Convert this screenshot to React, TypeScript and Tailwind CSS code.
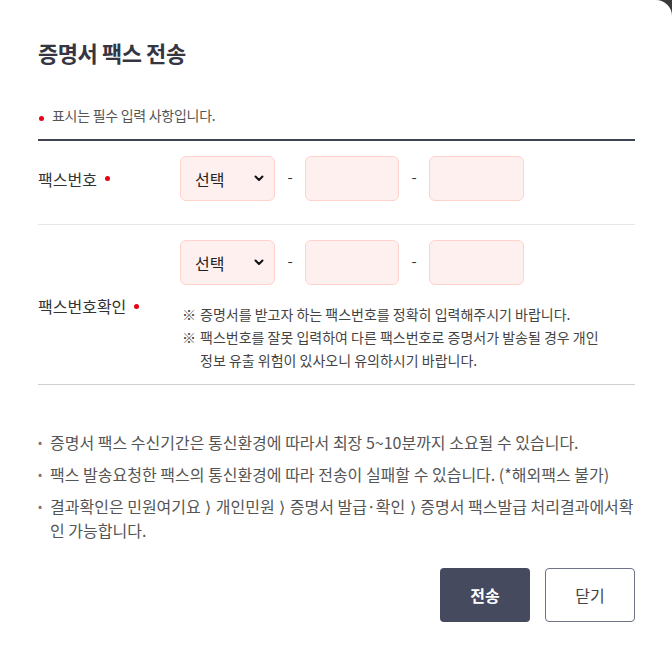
import React from 'react';

const font = { fontFamily: '"Noto Sans CJK KR", "Noto Sans", sans-serif' };

function Dot() {
    return <span className="inline-block w-[5px] h-[5px] rounded-full bg-[#e60012]" />;
}

function Chevron() {
    return (
        <svg width="10" height="7" viewBox="0 0 10 7" fill="none">
            <path d="M1.5 1.5L5 5L8.5 1.5" stroke="#111" strokeWidth="2" strokeLinecap="round" strokeLinejoin="round" />
        </svg>
    );
}

function Sep() {
    return <span className="inline-block mx-[4px] w-[7px] text-center leading-[22px] font-['DejaVu_Sans'] font-light">⟩</span>;
}

function PhoneFields() {
    return (
        <div className="flex items-center">
            <div className="w-[95px] h-[45px] rounded-[6px] border border-[#ffd3cc] bg-[#fff0f0] flex items-center justify-between pl-[14px] pr-[10px]">
                <span className="text-[16px] text-[#222]">선택</span>
                <Chevron />
            </div>
            <span className="w-[30px] text-center text-[15px] text-[#333] -mt-[3px]">-</span>
            <div className="w-[94px] h-[45px] rounded-[6px] border border-[#ffd3cc] bg-[#fff0f0]" />
            <span className="w-[30px] text-center text-[15px] text-[#333] -mt-[3px]">-</span>
            <div className="w-[95px] h-[45px] rounded-[6px] border border-[#ffd3cc] bg-[#fff0f0]" />
        </div>
    );
}

export default function App() {
    const notes: React.ReactNode[] = [
        '증명서 팩스 수신기간은 통신환경에 따라서 최장 5~10분까지 소요될 수 있습니다.',
        '팩스 발송요청한 팩스의 통신환경에 따라 전송이 실패할 수 있습니다. (*해외팩스 불가)',
        <>결과확인은 민원여기요<Sep />개인민원<Sep />증명서 발급·확인<Sep />증명서 팩스발급 처리결과에서확인 가능합니다.</>,
    ];

    return (
        <div className="min-h-screen bg-[#3a3a3a]" style={font}>
            <div className="w-[672px] h-[652px] bg-white rounded-tr-[16px] pl-[38px] pr-[37px] pt-[36px]">
                <h1 className="text-[22px] leading-[32px] font-bold text-[#353642] tracking-[-0.02em]">증명서 팩스 전송</h1>

                <p className="mt-[38px] flex items-center text-[14px] leading-[18px] text-[#555] tracking-[-0.02em]">
                    <span className="ml-[1px] mr-[8px]"><Dot /></span>
                    표시는 필수 입력 사항입니다.
                </p>

                <div className="mt-[15px] border-t-2 border-[#3f4354]">
                    <div className="flex pt-[15px] pb-[23px] border-b border-[#e6e6e6]">
                        <div className="w-[142px] flex items-center gap-[8px] text-[16px] text-[#333]">
                            팩스번호 <Dot />
                        </div>
                        <PhoneFields />
                    </div>

                    <div className="flex pt-[15px] pb-[12px] border-b border-[#cfcfcf]">
                        <div className="w-[142px] flex items-center gap-[8px] text-[16px] text-[#333]">
                            팩스번호확인 <Dot />
                        </div>
                        <div className="flex-1">
                            <PhoneFields />
                            <ul className="mt-[18px] w-[430px] text-[14px] leading-[23px] text-[#444] pl-[2px]">
                                <li className="flex">
                                    <span className="w-[18px] shrink-0">※</span>
                                    <span>증명서를 받고자 하는 팩스번호를 정확히 입력해주시기 바랍니다.</span>
                                </li>
                                <li className="flex">
                                    <span className="w-[18px] shrink-0">※</span>
                                    <span>팩스번호를 잘못 입력하여 다른 팩스번호로 증명서가 발송될 경우 개인 정보 유출 위험이 있사오니 유의하시기 바랍니다.</span>
                                </li>
                            </ul>
                        </div>
                    </div>
                </div>

                <ul className="mt-[46px] flex flex-col gap-[10px] text-[16px] leading-[22px] text-[#555]">
                    {notes.map((n, i) => (
                        <li key={i} className="flex">
                            <span className="w-[12px] shrink-0 text-[12px] text-[#777]">•</span>
                            <span>{n}</span>
                        </li>
                    ))}
                </ul>

                <div className="mt-[27px] flex justify-end gap-[15px]">
                    <button className="w-[90px] h-[54px] rounded-[4px] bg-[#454a5f] text-white text-[16px] font-bold">전송</button>
                    <button className="w-[90px] h-[54px] rounded-[4px] border border-[#6f7486] bg-white text-[#444] text-[16px]">닫기</button>
                </div>
            </div>
        </div>
    );
}
